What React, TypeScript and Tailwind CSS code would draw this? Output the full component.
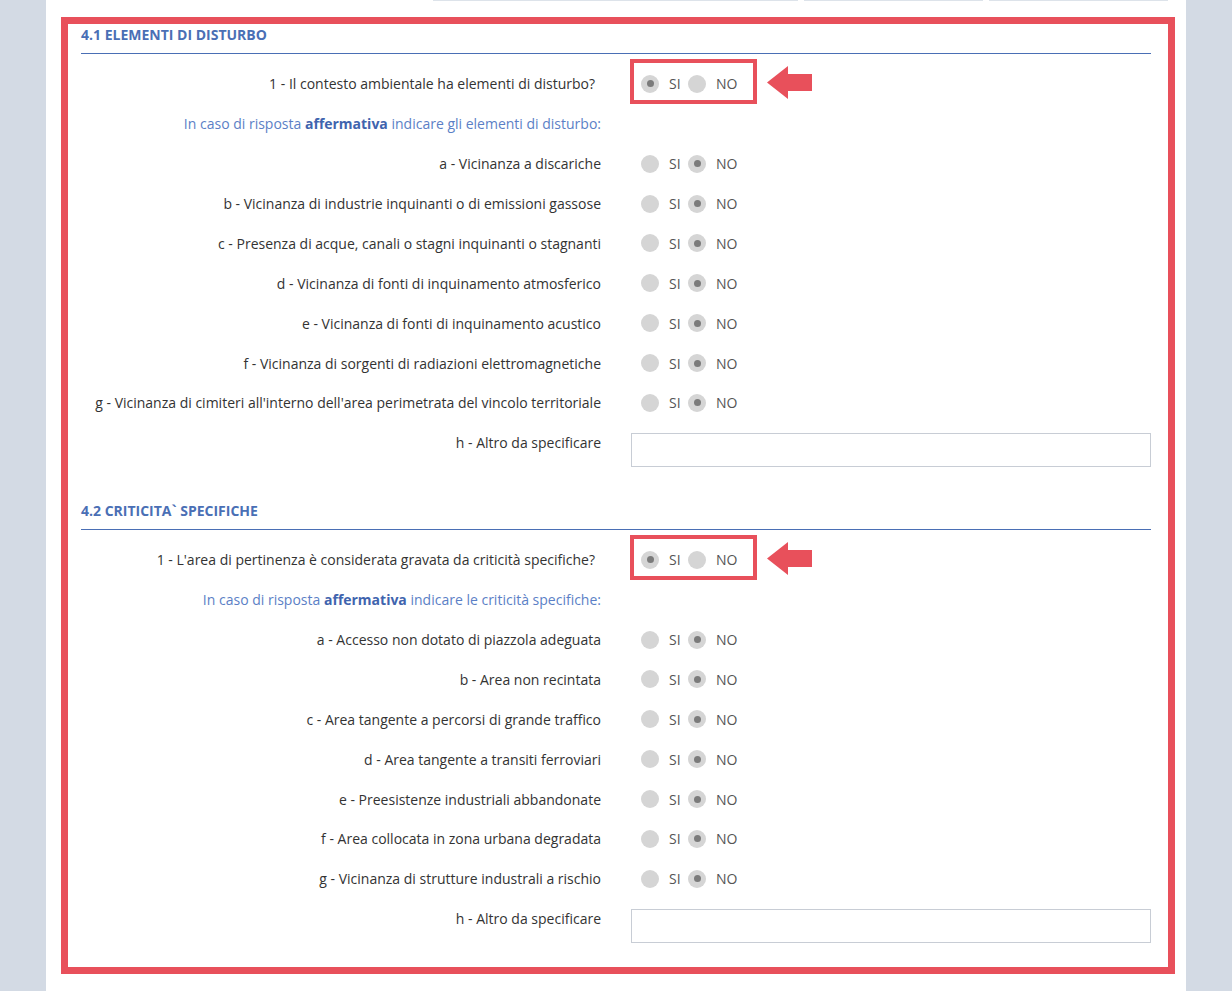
const sections = [
  {
    title: '4.1 ELEMENTI DI DISTURBO',
    question: '1 - Il contesto ambientale ha elementi di disturbo?',
    hint: 'gli elementi di disturbo:',
    items: [
      'a - Vicinanza a discariche',
      'b - Vicinanza di industrie inquinanti o di emissioni gassose',
      'c - Presenza di acque, canali o stagni inquinanti o stagnanti',
      'd - Vicinanza di fonti di inquinamento atmosferico',
      'e - Vicinanza di fonti di inquinamento acustico',
      'f - Vicinanza di sorgenti di radiazioni elettromagnetiche',
      "g - Vicinanza di cimiteri all'interno dell'area perimetrata del vincolo territoriale",
    ],
  },
  {
    title: '4.2 CRITICITA` SPECIFICHE',
    question: "1 - L'area di pertinenza è considerata gravata da criticità specifiche?",
    hint: 'le criticità specifiche:',
    items: [
      'a - Accesso non dotato di piazzola adeguata',
      'b - Area non recintata',
      'c - Area tangente a percorsi di grande traffico',
      'd - Area tangente a transiti ferroviari',
      'e - Preesistenze industriali abbandonate',
      'f - Area collocata in zona urbana degradata',
      'g - Vicinanza di strutture industrali a rischio',
    ],
  },
];

function Radio({ checked }: { checked: boolean }) {
  return (
    <span className="size-[18px] rounded-full bg-[#d5d5d5] flex items-center justify-center">
      {checked && <span className="size-[7px] rounded-full bg-[#7b7b7b]" />}
    </span>
  );
}

function YesNo({ yes }: { yes: boolean }) {
  return (
    <div className="flex items-center pl-[10px] text-[14px] text-[#555]">
      <Radio checked={yes} />
      <span className="ml-[10px] w-[19px]">SI</span>
      <Radio checked={!yes} />
      <span className="ml-[10px]">NO</span>
    </div>
  );
}

function Row({ label, children, className = '' }: { label: React.ReactNode; children?: React.ReactNode; className?: string }) {
  return (
    <div className="grid grid-cols-2 gap-[30px] h-[39.875px] items-center">
      <div className={`text-right ${className}`}>{label}</div>
      <div>{children}</div>
    </div>
  );
}

function Section({ s, first }: { s: (typeof sections)[number]; first: boolean }) {
  return (
    <div className={first ? '' : 'mt-[33px]'}>
      <div className="pt-px pb-2 border-b border-[#4a6fb5]">
        <h2 className="text-[14px] leading-5 font-bold text-[#4a6fb5]">{s.title}</h2>
      </div>
      <div className="mt-[10px]">
        <Row label={s.question} className="pr-[6px]">
          <div className="relative">
            <YesNo yes={true} />
            {/* annotation box + arrow */}
            <div className="absolute left-[-1px] top-[-14px] w-[127px] h-[45px] border-4 border-[#e8505b]" />
            <svg className="absolute left-[136px] top-[-7px]" width="45" height="33" viewBox="0 0 45 33">
              <path d="M0 16.5 L21 0 L21 8 L45 8 L45 25 L21 25 L21 33 Z" fill="#e8505b" />
            </svg>
          </div>
        </Row>
        <Row
          label={
            <span className="text-[#5b7fc6]">
              In caso di risposta <b className="font-bold text-[#3f64ae]">affermativa</b> indicare {s.hint}
            </span>
          }
        />
        {s.items.map((it) => (
          <Row key={it} label={it}>
            <YesNo yes={false} />
          </Row>
        ))}
        <div className="grid grid-cols-2 gap-[30px] pt-[10px]">
          <div className="text-right leading-5">h - Altro da specificare</div>
          <div className="h-[34px] border border-[#c8cdd5] bg-white" />
        </div>
      </div>
    </div>
  );
}

export default function App() {
  return (
    <div className="min-h-[991px] bg-[#d3dae4] font-['Open_Sans',sans-serif] text-[14px] text-[#333]">
      <div className="ml-[46px] w-[1140px] min-h-[991px] bg-white">
        <div className="flex h-px">
          <div className="ml-[387px] w-[365px] bg-[#dde3ea]" />
          <div className="ml-[6px] w-[179px] bg-[#dde3ea]" />
          <div className="ml-[6px] w-[179px] bg-[#dde3ea]" />
        </div>
        <div className="ml-[15px] mt-[16px] w-[1114px] border-[7px] border-[#e8505b] pl-[13px] pr-[17px] pb-[24px]">
          {sections.map((s, i) => (
            <Section key={s.title} s={s} first={i === 0} />
          ))}
        </div>
      </div>
    </div>
  );
}
